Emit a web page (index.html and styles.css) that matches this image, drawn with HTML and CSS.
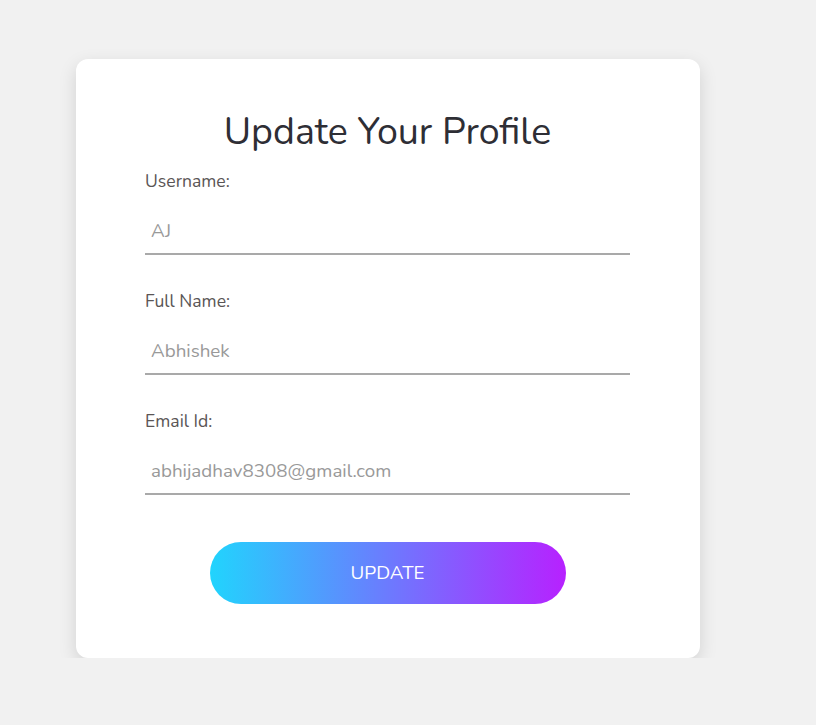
FILE: index.html
```html
<!DOCTYPE html>
<html>
<head>
<meta charset="utf-8">
<link rel="stylesheet" href="styles.css">
</head>
<body>
<div class="card">
  <h1 class="title">Update Your Profile</h1>
  <form class="form">
    <div class="group">
      <label class="label">Username:</label>
      <input class="field" type="text" value="AJ">
    </div>
    <div class="group">
      <label class="label">Full Name:</label>
      <input class="field" type="text" value="Abhishek">
    </div>
    <div class="group">
      <label class="label">Email Id:</label>
      <input class="field" type="text" value="abhijadhav8308@gmail.com">
    </div>
    <div class="actions">
      <button class="btn" type="button">UPDATE</button>
    </div>
  </form>
</div>
</body>
</html>
```
FILE: styles.css
```css
html, body {
  margin: 0;
  padding: 0;
  background: #f1f1f1;
  font-family: "Nunito", "Lato", "Noto Sans", sans-serif;
}
.card {
  box-sizing: border-box;
  width: 624px;
  height: 599px;
  margin: 59px 0 0 76px;
  background: #fff;
  border-radius: 12px;
  box-shadow: 0 6px 18px rgba(0, 0, 0, 0.13);
  padding: 51px 70px 0 69px;
}
.title {
  margin: 0 0 16px;
  text-align: center;
  font-size: 37.6px;
  line-height: 43px;
  font-weight: 400;
  color: #2e2e35;
}
.group {
  display: flex;
  flex-direction: column;
  margin-bottom: 34px;
}
.label {
  font-size: 17.6px;
  line-height: 24px;
  color: #5a5555;
}
.field {
  margin-top: 8px;
  box-sizing: border-box;
  width: 485px;
  height: 54px;
  border: none;
  border-bottom: 2px solid #a9a9a9;
  padding: 18px 6px 10px;
  font-family: inherit;
  font-size: 18.8px;
  line-height: 24px;
  color: #999;
  outline: none;
  background: transparent;
}
.actions {
  display: flex;
  justify-content: center;
  padding-top: 13px;
}
.btn {
  width: 356px;
  height: 62px;
  border: none;
  border-radius: 31px;
  background: linear-gradient(90deg, #21d4fd 0%, #b721ff 100%);
  color: #fff;
  font-family: inherit;
  font-size: 18.8px;
  cursor: pointer;
}
```
